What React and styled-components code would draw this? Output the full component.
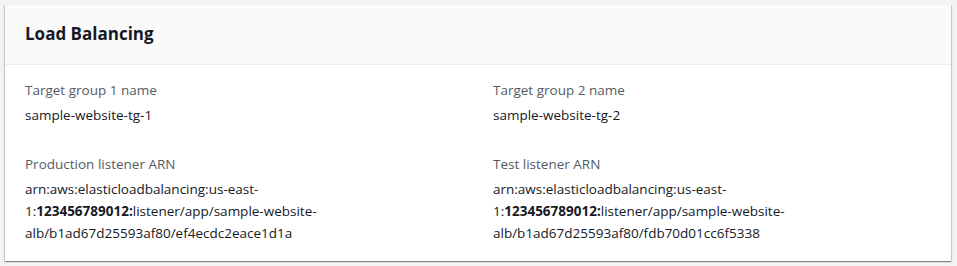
import React from 'react';
import styled, { createGlobalStyle } from 'styled-components';

const GlobalStyle = createGlobalStyle`
    html, body {
        margin: 0;
        background: #f2f3f3;
    }

    body {
        padding: 5px 6px 6px 5px;
        font-family: "Open Sans", "Liberation Sans", Arial, sans-serif;
        -webkit-font-smoothing: antialiased;
    }
`;

const Card = styled.section`
    background: #fff;
    box-shadow: 0 1px 1px 0 rgba(0, 28, 36, 0.3), 1px 1px 1px 0 rgba(0, 28, 36, 0.15), -1px 1px 1px 0 rgba(0, 28, 36, 0.15);
`;

const Header = styled.header`
    background: #fafafa;
    border-bottom: 1px solid #eaeded;
    padding: 18px 20px 19px;

    h2 {
        margin: 0;
        font-size: 17px;
        line-height: 22px;
        font-weight: 700;
        color: #16191f;
    }
`;

const Body = styled.div`
    display: grid;
    grid-template-columns: 1fr 1fr;
    column-gap: 30px;
    row-gap: 27px;
    padding: 14px 20px 17px;
`;

const Field = styled.div`
    display: flex;
    flex-direction: column;
    gap: 3px;
    font-size: 13.5px;
    line-height: 22px;
`;

const Label = styled.div`
    color: #545b64;
`;

const Value = styled.div`
    color: #16191f;
    overflow-wrap: break-word;

    b {
        font-weight: 700;
    }
`;

const fields = [
    { label: 'Target group 1 name', value: 'sample-website-tg-1' },
    { label: 'Target group 2 name', value: 'sample-website-tg-2' },
    { label: 'Production listener ARN', arn: 'ef4ecdc2eace1d1a' },
    { label: 'Test listener ARN', arn: 'fdb70d01cc6f5338' },
];

const Arn = ({ id }) => (
    <>
        arn:aws:elasticloadbalancing:us-east-1:<b>123456789012:</b>listener/app/sample-website-alb/b1ad67d25593af80/{id}
    </>
);

const App = () => (
    <>
        <GlobalStyle />
        <Card>
            <Header>
                <h2>Load Balancing</h2>
            </Header>
            <Body>
                {fields.map(f => (
                    <Field key={f.label}>
                        <Label>{f.label}</Label>
                        <Value>{f.arn ? <Arn id={f.arn} /> : f.value}</Value>
                    </Field>
                ))}
            </Body>
        </Card>
    </>
);

export default App;
